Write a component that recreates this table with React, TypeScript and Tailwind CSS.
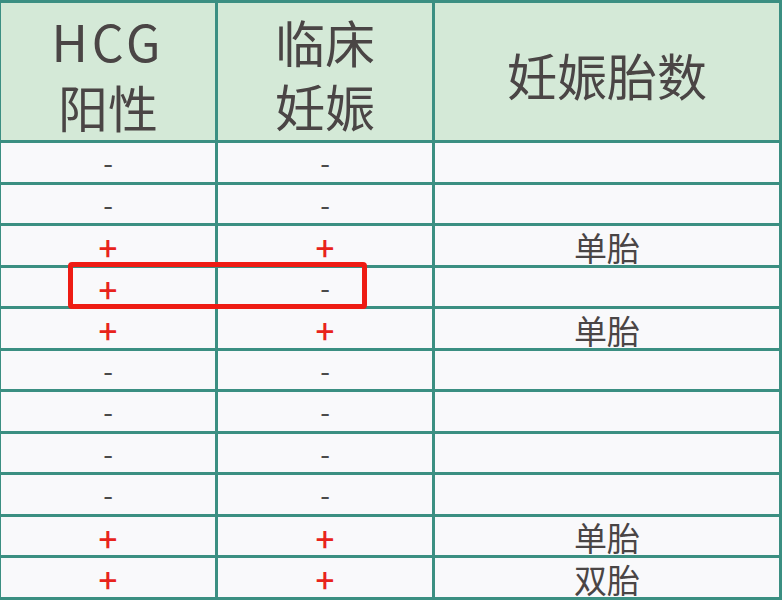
import * as React from "react"

type Mark = "+" | "-"

interface Row {
  hcg: Mark
  clinical: Mark
  fetus?: string
}

const rows: Row[] = [
  { hcg: "-", clinical: "-" },
  { hcg: "-", clinical: "-" },
  { hcg: "+", clinical: "+", fetus: "单胎" },
  { hcg: "+", clinical: "-" },
  { hcg: "+", clinical: "+", fetus: "单胎" },
  { hcg: "-", clinical: "-" },
  { hcg: "-", clinical: "-" },
  { hcg: "-", clinical: "-" },
  { hcg: "-", clinical: "-" },
  { hcg: "+", clinical: "+", fetus: "单胎" },
  { hcg: "+", clinical: "+", fetus: "双胎" },
]

const font = { fontFamily: '"Noto Sans CJK SC", "Noto Sans", sans-serif' }

function MarkCell({ mark }: { mark: Mark }) {
  return (
    <div className="flex items-center justify-center bg-[#f9f9fb] pt-[4px]">
      {mark === "+" ? (
        <span className="text-[33px] leading-[30px] font-medium text-[#e8231b]">+</span>
      ) : (
        <span className="text-[28px] leading-[28px] text-[#4a4a4a] -mt-[4px]">-</span>
      )}
    </div>
  )
}

export default function App() {
  return (
    <div className="relative w-[782px] h-[600px] overflow-hidden bg-[#f9f9fb]" style={font}>
      <div className="grid grid-cols-[214px_214px_344px] grid-rows-[137px_repeat(11,38.5px)] gap-[3px] pt-[3px] pl-[1px] pr-[3px] pb-[3px] bg-[#3b8f82]">
        <div className="flex flex-col items-center justify-center gap-[16px] bg-[#d4e9d7] text-[50px] leading-none text-[#4a4545] pt-[3px]">
          <span className="tracking-[4px]">HCG</span>
          <span>阳性</span>
        </div>
        <div className="flex flex-col items-center justify-center gap-[14px] bg-[#d4e9d7] text-[50px] leading-none text-[#4a4545] pt-[3px]">
          <span>临床</span>
          <span>妊娠</span>
        </div>
        <div className="flex items-center justify-center bg-[#d4e9d7] text-[50px] leading-none text-[#4a4545] pt-[4px]">
          妊娠胎数
        </div>

        {rows.map((row, i) => (
          <React.Fragment key={i}>
            <MarkCell mark={row.hcg} />
            <MarkCell mark={row.clinical} />
            <div className="flex items-center justify-center bg-[#f9f9fb] pt-[4px]">
              <span className="text-[33px] leading-[33px] text-[#4a4545]">{row.fetus}</span>
            </div>
          </React.Fragment>
        ))}
      </div>

      {/* highlight on the +/- row */}
      <div className="absolute left-[68px] top-[262px] w-[299px] h-[47px] border-[5px] border-[#ee1c14] rounded-[4px]" />
    </div>
  )
}
